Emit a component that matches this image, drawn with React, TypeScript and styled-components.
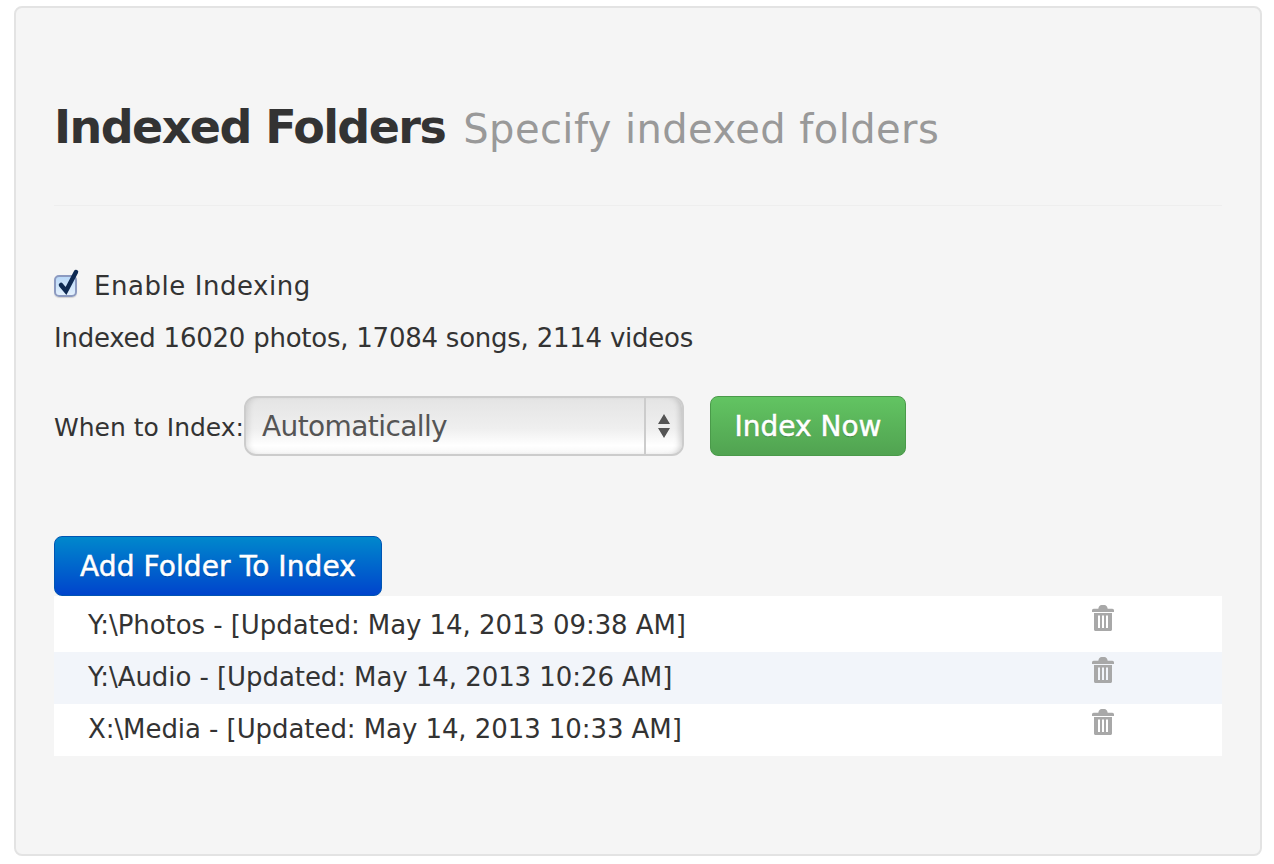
import { createGlobalStyle, styled } from "styled-components";

const GlobalStyle = createGlobalStyle`
    html, body {
        margin: 0;
        padding: 0;
        background-color: #ffffff;
        font-family: "DejaVu Sans", "Open Sans", sans-serif;
    }
`;

const Page = styled.div`
    box-sizing: border-box;
    width: 1274px;
    height: 864px;
    padding: 6px 12px 8px 14px;
`;

const Well = styled.div`
    box-sizing: border-box;
    height: 850px;
    padding: 0 38px;
    background-color: #f5f5f5;
    border: 2px solid #e3e3e3;
    border-radius: 8px;
`;

const Header = styled.header`
    height: 198px;
    box-sizing: border-box;
    padding-top: 88px;
    border-bottom: 1px solid #eeeeee;
    white-space: nowrap;
`;

const Title = styled.h1`
    display: inline;
    margin: 0;
    font-size: 46px;
    line-height: 62px;
    font-weight: bold;
    letter-spacing: -1.58px;
    color: #333333;
`;

const SubTitle = styled.small`
    margin-left: 18px;
    font-size: 40px;
    line-height: 62px;
    font-weight: normal;
    letter-spacing: 0.43px;
    color: #999999;
`;

const CheckRow = styled.label`
    display: flex;
    align-items: center;
    gap: 17px;
    margin-top: 62px;
    height: 36px;
    font-size: 26px;
    letter-spacing: 0.55px;
    color: #333333;
`;

const Box = styled.span`
    position: relative;
    box-sizing: border-box;
    width: 23px;
    height: 22px;
    border: 2px solid #8c9ac0;
    border-radius: 5px;
    background: linear-gradient(#b9d8f8, #e4f1fd);
    box-shadow: 0 1px 1px rgba(0, 0, 0, 0.15);
`;

const Tick = styled.svg`
    position: absolute;
    left: -1px;
    top: -9px;
`;

const Stats = styled.p`
    margin: 16px 0 0;
    font-size: 26px;
    line-height: 36px;
    letter-spacing: -0.24px;
    color: #333333;
`;

const WhenRow = styled.div`
    display: flex;
    align-items: center;
    margin-top: 40px;
    height: 60px;
`;

const WhenLabel = styled.span`
    padding-top: 3px;
    width: 190px;
    font-size: 25px;
    color: #333333;
    white-space: nowrap;
`;

const Select = styled.div`
    box-sizing: border-box;
    display: flex;
    width: 440px;
    height: 60px;
    border: 2px solid #cccccc;
    border-radius: 12px;
    overflow: hidden;
    background: linear-gradient(#e4e4e4 0%, #efefef 55%, #ffffff 85%, #f6f6f6 100%);
    box-shadow: inset 6px 0 6px -4px rgba(0, 0, 0, 0.12), inset -6px 0 6px -4px rgba(0, 0, 0, 0.18);
`;

const SelectValue = styled.span`
    flex: 1;
    padding-left: 16px;
    font-size: 28px;
    letter-spacing: -0.6px;
    line-height: 58px;
    color: #555555;
`;

const SelectArrows = styled.span`
    display: flex;
    align-items: center;
    justify-content: center;
    width: 36px;
    border-left: 2px solid #cccccc;
`;

const Button = styled.button<{ $from: string; $to: string; $edge: string; $width: number }>`
    box-sizing: border-box;
    display: block;
    width: ${(p) => p.$width}px;
    height: 60px;
    padding: 0;
    font-family: inherit;
    font-size: 28px;
    font-weight: normal;
    color: #ffffff;
    -webkit-text-stroke: 0.5px #ffffff;
    background: linear-gradient(${(p) => p.$from}, ${(p) => p.$to});
    border: 1px solid ${(p) => p.$edge};
    border-radius: 8px;
    text-shadow: 0 1px 1px rgba(0, 0, 0, 0.25);
`;

const IndexNow = styled(Button)`
    margin-left: 26px;
`;

const AddFolder = styled(Button)`
    margin-top: 80px;
    letter-spacing: 0.1px;
`;

const FolderList = styled.div`
    & > :first-child {
        padding-top: 4px;
    }
`;

const Row = styled.div<{ $striped?: boolean }>`
    display: flex;
    height: 52px;
    padding-left: 34px;
    font-size: 26px;
    line-height: 50px;
    letter-spacing: -0.07px;
    color: #333333;
    white-space: nowrap;
    background-color: ${(p) => (p.$striped ? "#f2f5fa" : "#ffffff")};
`;

const RowText = styled.span`
    flex: 1;
`;

const Trash = styled.svg`
    margin: 3px 107px 0 0;
`;

const rows = [
    "Y:\\Photos - [Updated: May 14, 2013 09:38 AM]",
    "Y:\\Audio - [Updated: May 14, 2013 10:26 AM]",
    "X:\\Media - [Updated: May 14, 2013 10:33 AM]",
];

function TrashIcon() {
    return (
        <Trash width="24" height="28" viewBox="0 0 24 28" fill="#a8a8a8">
            <path d="M1 7.500c0-1 .7-1.700 1.700-1.700h4.600C7.800 3.200 9 2 10.500 2h3c1.500 0 2.700 1.200 3.200 3.800h4.600c1 0 1.700.7 1.700 1.700V9H1z" />
            <path fillRule="evenodd" d="M3 10h18v16.500c0 .8-.7 1.500-1.500 1.500h-15C3.700 28 3 27.300 3 26.500zM7 12.500v12.500h2V12.500zM11 12.500v12.500h2V12.500zM15 12.500v12.500h2V12.500z" />
        </Trash>
    );
}

export default function App() {
    return (
        <Page>
            <GlobalStyle />
            <Well>
                <Header>
                    <Title>Indexed Folders</Title>
                    <SubTitle>Specify indexed folders</SubTitle>
                </Header>
                <CheckRow>
                    <Box>
                        <Tick width="26" height="30" viewBox="0 0 26 30">
                            <path d="M6 17l5 6L21 4" fill="none" stroke="#0f2a52" strokeWidth="4.500" strokeLinecap="round" />
                        </Tick>
                    </Box>
                    Enable Indexing
                </CheckRow>
                <Stats>Indexed 16020 photos, 17084 songs, 2114 videos</Stats>
                <WhenRow>
                    <WhenLabel>When to Index:</WhenLabel>
                    <Select>
                        <SelectValue>Automatically</SelectValue>
                        <SelectArrows>
                            <svg width="14" height="26" viewBox="0 0 14 26" fill="#555555">
                                <path d="M7 1l6 10H1zM1 15h12L7 25z" />
                            </svg>
                        </SelectArrows>
                    </Select>
                    <IndexNow $from="#62c462" $to="#51a351" $edge="#4a9a4a" $width={196}>
                        Index Now
                    </IndexNow>
                </WhenRow>
                <AddFolder $from="#0088cc" $to="#0044cc" $edge="#0055b3" $width={328}>
                    Add Folder To Index
                </AddFolder>
                <FolderList>
                    {rows.map((row, i) => (
                        <Row key={row} $striped={i === 1}>
                            <RowText>{row}</RowText>
                            <TrashIcon />
                        </Row>
                    ))}
                </FolderList>
            </Well>
        </Page>
    );
}
